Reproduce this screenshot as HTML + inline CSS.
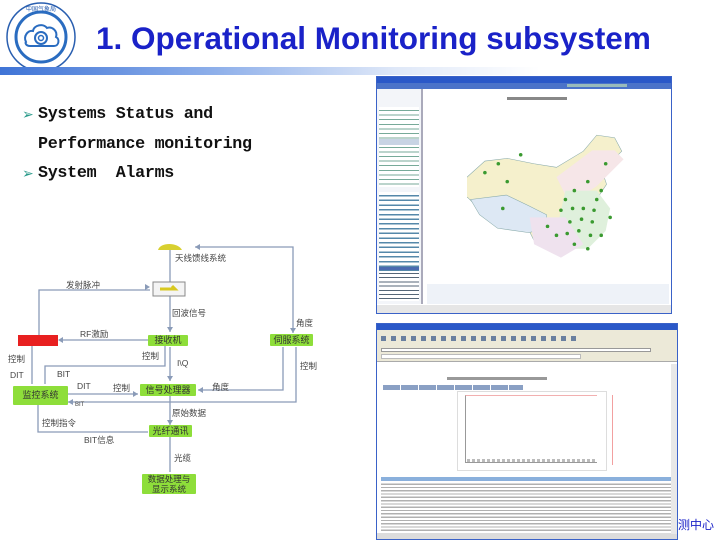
<!DOCTYPE html>
<html><head><meta charset="utf-8"><style>
*{margin:0;padding:0;box-sizing:border-box}
body{width:720px;height:540px;background:#fff;position:relative;overflow:hidden;font-family:"Liberation Sans","Noto Sans CJK SC",sans-serif}
.abs{position:absolute}
.title{left:96px;top:20px;font-size:31.5px;font-weight:bold;color:#1a22c8;white-space:nowrap}
.bar{left:0;top:67px;width:720px;height:8px;background:linear-gradient(90deg,#3f74d6 0%,#8fb0ea 30%,#dfe8f8 55%,#fff 75%)}
.bul{left:38px;top:100px;font-family:"Liberation Mono",monospace;font-size:16.7px;line-height:29.5px;color:#111;white-space:pre;font-weight:bold;letter-spacing:-0.3px}
.ar{position:absolute;left:22px;color:#2a9a8a;font-size:14px}
.g{position:absolute;background:#8ede3a;color:#333;font-size:9px;text-align:center;font-family:"Liberation Sans","Noto Sans CJK SC",sans-serif;border-radius:1px}
.lb{position:absolute;font-size:8.5px;color:#444;font-family:"Liberation Sans","Noto Sans CJK SC",sans-serif;white-space:nowrap}
.win{position:absolute;border:1px solid #3a62c8;background:#fff}
</style></head><body>
<svg class="abs" style="left:4px;top:2px" width="74" height="72" viewBox="0 0 74 72">
<circle cx="37" cy="35" r="34" fill="#fff" stroke="#2a5fb0" stroke-width="1.5"/>
<circle cx="37" cy="35" r="25" fill="#fff" stroke="#2a6cc0" stroke-width="3"/>
<path d="M22 40c-3-6 2-12 7-11 1-6 10-8 14-3 5-2 11 3 9 9 4 2 3 9-2 9H26c-4 0-5-3-4-4z" fill="#fff" stroke="#2a6cc0" stroke-width="2"/>
<circle cx="37" cy="36" r="6" fill="none" stroke="#2a6cc0" stroke-width="2"/>
<circle cx="37" cy="36" r="2.5" fill="none" stroke="#2a6cc0" stroke-width="1.5"/>
<text x="37" y="9" font-size="6" text-anchor="middle" fill="#2a5fb0">中国气象局</text>
</svg>
<div class="abs title">1. Operational Monitoring subsystem</div>
<div class="abs bar"></div>
<div class="ar" style="top:106px">➢</div>
<div class="ar" style="top:165px">➢</div>
<div class="abs bul">Systems Status and
Performance monitoring
System  Alarms</div>

<svg class="abs" style="left:0;top:230px" width="360" height="280" viewBox="0 230 360 280">
<g stroke="#8a9bb8" stroke-width="1.3" fill="none">
<path d="M170 250V282M170 296V332M39 335V290H150M148 340H60M293 333V247H195M170 347V381M283 347V390H198M296 347V402H68M165 346V366H45V384M66 394H138M170 395V425M38 405V432H148M170 437V472M32 346V384"/>
</g>
<g fill="#8a9bb8"><path d="M150 287l-5-3v6z"/><path d="M170 332l-3-5h6z"/><path d="M58 340l5-3v6z"/><path d="M195 247l5-3v6z"/><path d="M293 333l-3-5h6z"/><path d="M170 381l-3-5h6z"/><path d="M198 390l5-3v6z"/><path d="M68 402l5-3v6z"/><path d="M138 394l-5-3v6z"/><path d="M170 425l-3-5h6z"/></g>
<path d="M158 250c2-8 20-8 24 0z" fill="#d8d030"/>
<rect x="153" y="282" width="32" height="14" fill="#f4f4f4" stroke="#888"/>
<path d="M160 289h15l-3-3" stroke="#d8c820" stroke-width="3" fill="none"/>
<rect x="18" y="335" width="40" height="11" fill="#e82020"/>
</svg>
<div class="lb" style="left:175px;top:252px">天线馈线系统</div>
<div class="lb" style="left:66px;top:279px">发射脉冲</div>
<div class="lb" style="left:172px;top:307px">回波信号</div>
<div class="lb" style="left:296px;top:317px">角度</div>
<div class="lb" style="left:80px;top:328px">RF激励</div>
<div class="g" style="left:148px;top:335px;width:40px;height:11px;line-height:11px">接收机</div>
<div class="g" style="left:270px;top:334px;width:43px;height:12px;line-height:12px">伺服系统</div>
<div class="lb" style="left:8px;top:353px">控制</div>
<div class="lb" style="left:142px;top:350px">控制</div>
<div class="lb" style="left:177px;top:358px">I\Q</div>
<div class="lb" style="left:300px;top:360px">控制</div>
<div class="lb" style="left:10px;top:370px">DIT</div>
<div class="lb" style="left:57px;top:369px">BIT</div>
<div class="lb" style="left:77px;top:381px">DIT</div>
<div class="lb" style="left:113px;top:382px">控制</div>
<div class="lb" style="left:212px;top:381px">角度</div>
<div class="g" style="left:140px;top:384px;width:56px;height:12px;line-height:12px">信号处理器</div>
<div class="g" style="left:13px;top:386px;width:55px;height:19px;line-height:19px">监控系统</div>
<div class="lb" style="left:75px;top:402px;font-size:6px">BIT</div>
<div class="lb" style="left:172px;top:407px">原始数据</div>
<div class="lb" style="left:42px;top:417px">控制指令</div>
<div class="g" style="left:149px;top:425px;width:43px;height:12px;line-height:12px">光纤通讯</div>
<div class="lb" style="left:84px;top:434px">BIT信息</div>
<div class="lb" style="left:174px;top:452px">光缆</div>
<div class="g" style="left:142px;top:474px;width:54px;height:20px;line-height:10px;font-size:8.5px">数据处理与<br>显示系统</div>

<div class="win" style="left:376px;top:76px;width:296px;height:238px">
 <div class="abs" style="left:0;top:0;width:294px;height:6px;background:#2a58c8"></div>
 <div class="abs" style="left:0;top:6px;width:294px;height:6px;background:#4b73c9"></div>
 <div class="abs" style="left:0;top:12px;width:46px;height:215px;background:#f3f5f9;border-right:2px solid #aab"></div>
 <div class="abs" style="left:2px;top:30px;width:40px;height:80px;background:repeating-linear-gradient(#fff 0 3px,#7a9 3px 4px,#fff 4px 4.6px)"></div>
 <div class="abs" style="left:2px;top:62px;width:40px;height:6px;background:#c8d4e4"></div>
 <div class="abs" style="left:2px;top:115px;width:40px;height:82px;background:repeating-linear-gradient(#fff 0 3px,#58a 3px 4.5px,#fff 4.5px 4.7px)"></div>
 <div class="abs" style="left:2px;top:190px;width:40px;height:3px;background:#4a6ab0"></div>
 <div class="abs" style="left:2px;top:194px;width:40px;height:30px;background:repeating-linear-gradient(#fff 0 2px,#567 2px 3px,#fff 3px 4.2px)"></div>
 <div class="abs" style="left:190px;top:7px;width:60px;height:3px;background:#9bb"></div>
 <div class="abs" style="left:130px;top:20px;width:60px;height:3px;background:#888"></div>
 <svg class="abs" style="left:90px;top:52px" width="170" height="150" viewBox="0 0 190 150">
  <path d="M0 45l20-18 25-3 30 6 25 4 30-18 15-18 20 3 8 15-12 12-10 10 5 15 -8 12 5 20-5 20-12 10-20 10-5 5-20-10-15-2-10-20-25-5-25-10-15-15-15-5z" fill="#f5f0cc" stroke="#8aa" stroke-width=".6"/>
  <path d="M4 70l40-5 25 12 20 10 0 15-20 5-35-5-20-15z" fill="#dde8f4" stroke="#8aa" stroke-width=".6"/>
  <path d="M100 45l40-30 25 0 10 10-20 20-10 10-15 10-20 0z" fill="#f6e6e8"/>
  <path d="M110 60l35 0 15 20-5 25-20 20-25 0-10-20z" fill="#dff0dc"/>
  <path d="M70 90l40 0 20 30-25 15-30-15z" fill="#efe2ee"/>
  <g fill="#3a9a30"><circle cx="110" cy="70" r="2"/><circle cx="120" cy="60" r="2"/><circle cx="130" cy="80" r="2"/><circle cx="140" cy="95" r="2"/><circle cx="115" cy="95" r="2"/><circle cx="125" cy="105" r="2"/><circle cx="135" cy="50" r="2"/><circle cx="145" cy="70" r="2"/><circle cx="150" cy="110" r="2"/><circle cx="100" cy="110" r="2"/><circle cx="105" cy="82" r="2"/><circle cx="20" cy="40" r="2"/><circle cx="35" cy="30" r="2"/><circle cx="45" cy="50" r="2"/><circle cx="40" cy="80" r="2"/><circle cx="155" cy="30" r="2"/><circle cx="120" cy="120" r="2"/><circle cx="135" cy="125" r="2"/><circle cx="90" cy="100" r="2"/><circle cx="160" cy="90" r="2"/><circle cx="118" cy="80" r="2"/><circle cx="128" cy="92" r="2"/><circle cx="138" cy="110" r="2"/><circle cx="112" cy="108" r="2"/><circle cx="150" cy="60" r="2"/><circle cx="142" cy="82" r="2"/><circle cx="60" cy="20" r="2"/></g>
 </svg>
 <div class="abs" style="left:50px;top:207px;width:242px;height:20px;background:#eef2f8"></div>
 <div class="abs" style="left:0;top:228px;width:294px;height:8px;background:#e6e6e6"></div>
</div>

<div class="win" style="left:376px;top:323px;width:302px;height:217px">
 <div class="abs" style="left:0;top:0;width:300px;height:6px;background:#2a58c8"></div>
 <div class="abs" style="left:0;top:6px;width:300px;height:32px;background:#ece9d8;border-bottom:1px solid #aaa"></div>
 <div class="abs" style="left:4px;top:12px;width:200px;height:5px;background:repeating-linear-gradient(90deg,#6a80a0 0 5px,#ece9d8 5px 10px)"></div>
 <div class="abs" style="left:4px;top:24px;width:270px;height:4px;background:#fff;border:1px solid #999"></div>
 <div class="abs" style="left:4px;top:30px;width:200px;height:5px;background:#fff;border:1px solid #bbb"></div>
 <div class="abs" style="left:70px;top:53px;width:100px;height:3px;background:#999"></div>
 <div class="abs" style="left:6px;top:61px;width:140px;height:5px;background:repeating-linear-gradient(90deg,#8aa0c4 0 17px,#fff 17px 18px)"></div>
 <div class="abs" style="left:80px;top:67px;width:150px;height:80px;border:1px solid #ddd"></div>
 <div class="abs" style="left:88px;top:71px;width:132px;height:68px;border-left:1px solid #999;border-bottom:1px solid #999;border-top:1px solid #f2b0b0"></div>
 <div class="abs" style="left:235px;top:71px;width:1px;height:70px;background:#f2a0a0"></div>
 <div class="abs" style="left:90px;top:135px;width:130px;height:3px;background:repeating-linear-gradient(90deg,#bbb 0 3px,#fff 3px 5px)"></div>
 <div class="abs" style="left:4px;top:153px;width:296px;height:4px;background:#8ab0dc"></div>
 <div class="abs" style="left:4px;top:158px;width:296px;height:52px;background:repeating-linear-gradient(#fff 0 1.5px,#b0b0b0 1.5px 2.8px,#fff 2.8px 3.3px)"></div>
 <div class="abs" style="left:0;top:209px;width:300px;height:6px;background:#dcdcdc"></div>
 <div class="abs" style="left:294px;top:40px;width:6px;height:170px;background:#e8e8e8"></div>
</div>
<div class="abs" style="left:678px;top:516px;font-size:12px;color:#1a22c8;font-family:'Liberation Sans','Noto Sans CJK SC',sans-serif">测中心</div>
</body></html>
